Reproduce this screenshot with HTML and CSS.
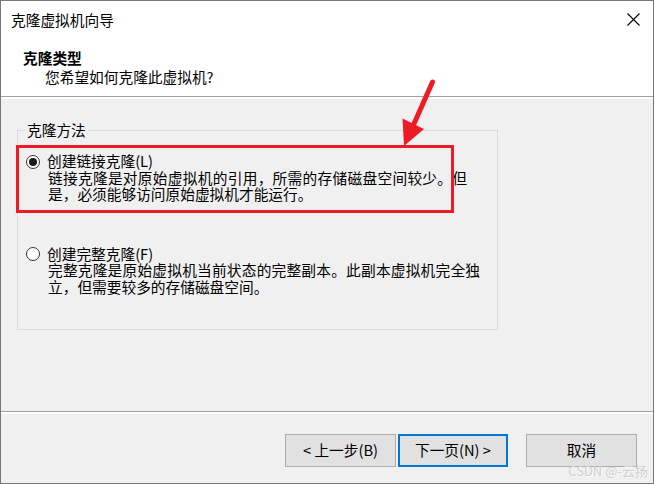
FILE: index.html
```html
<!DOCTYPE html>
<html lang="zh-CN">
<head>
<meta charset="utf-8">
<title>克隆虚拟机向导</title>
<link rel="stylesheet" href="styles.css">
</head>
<body>
<div class="window">
  <div class="top">
    <div class="titlebar">
      <span class="title">克隆虚拟机向导</span>
      <svg class="close" viewBox="0 0 13 13" aria-hidden="true"><path d="M0.5 0.5 L12.5 12.5 M12.5 0.5 L0.5 12.5" stroke="#000" stroke-width="1.1" fill="none"/></svg>
    </div>
    <div class="heading">
      <div class="h-title">克隆类型</div>
      <div class="h-sub">您希望如何克隆此虚拟机?</div>
    </div>
  </div>
  <div class="body">
    <fieldset class="group">
      <legend>克隆方法</legend>
      <div class="option">
        <span class="radio checked"></span>
        <div class="otext">
          <div class="olabel">创建链接克隆(L)</div>
          <div class="oline full linked">链接克隆是对原始虚拟机的引用，所需的存储磁盘空间较少。但</div>
          <div class="oline">是，必须能够访问原始虚拟机才能运行。</div>
        </div>
      </div>
      <div class="option second">
        <span class="radio"></span>
        <div class="otext">
          <div class="olabel">创建完整克隆(F)</div>
          <div class="oline full complete">完整克隆是原始虚拟机当前状态的完整副本。此副本虚拟机完全独</div>
          <div class="oline">立，但需要较多的存储磁盘空间。</div>
        </div>
      </div>
    </fieldset>
  </div>
  <div class="footer">
    <button class="btn back">&lt; 上一步(B)</button>
    <button class="btn next">下一页(N) &gt;</button>
    <button class="btn cancel">取消</button>
  </div>
  <svg class="annot" viewBox="0 0 655 484" aria-hidden="true">
    <rect x="17.5" y="146.5" width="435" height="65" fill="none" stroke="#ed1c24" stroke-width="3"/>
    <line x1="432.5" y1="82" x2="413" y2="126" stroke="#ed1c24" stroke-width="5" stroke-linecap="round"/>
    <polygon points="402.5,118.5 424,129 404,146" fill="#ed1c24"/>
  </svg>
  <div class="watermark">CSDN @-云扬</div>
</div>
</body>
</html>
```

FILE: styles.css
```css
html, body {
  margin: 0;
  padding: 0;
  background: #fff;
}

.window {
  position: relative;
  width: 654px;
  height: 484px;
  box-sizing: border-box;
  border: 1px solid #777;
  background: #f0f0f0;
  display: flex;
  flex-direction: column;
  font-family: "Noto Sans CJK SC", sans-serif;
  font-size: 14.7px;
  color: #000;
}

.top {
  flex: none;
  height: 96px;
  box-sizing: border-box;
  background: #fff;
  border-bottom: 1px solid #a0a0a0;
}

.titlebar {
  height: 38px;
  display: flex;
  align-items: center;
  justify-content: space-between;
  padding: 0 13px 0 10px;
}

.title {
  line-height: 20px;
}

.close {
  width: 13px;
  height: 13px;
  margin-bottom: 2px;
}

.heading {
  padding: 9px 0 0 22px;
}

.h-title {
  font-weight: bold;
  line-height: 19px;
}

.h-sub {
  line-height: 19px;
  padding-left: 22px;
}

.body {
  flex: none;
  height: 315px;
  box-sizing: border-box;
  border-top: 2px solid #fff;
  border-bottom: 1px solid #a0a0a0;
  padding: 23px 0 0 16px;
}

.group {
  margin: 0;
  width: 481px;
  box-sizing: border-box;
  border: 1px solid #dcdcdc;
  padding: 15px 0 34px 7px;
}

.group legend {
  padding: 0 2px;
  line-height: 16px;
}

.option {
  display: flex;
  line-height: 16.5px;
}

.option.second {
  margin-top: 43px;
}

.radio {
  flex: none;
  width: 14px;
  height: 14px;
  box-sizing: border-box;
  border: 1px solid #333;
  border-radius: 50%;
  background: #fff;
  margin: 1.5px 7px 0 1px;
  display: flex;
  align-items: center;
  justify-content: center;
}

.radio.checked::after {
  content: "";
  width: 8px;
  height: 8px;
  border-radius: 50%;
  background: #1a1a1a;
}

.oline {
  padding-left: 1px;
  white-space: nowrap;
}

.oline.full {
  text-align: justify;
  text-align-last: justify;
  text-justify: inter-character;
}

.oline.linked {
  width: 419px;
}

.oline.complete {
  width: 432px;
}

.footer {
  flex: 1;
  border-top: 2px solid #fff;
  display: flex;
  justify-content: flex-end;
  align-items: flex-start;
  padding: 20px 16px 0 0;
}

.btn {
  width: 111px;
  height: 33px;
  box-sizing: border-box;
  border: 1px solid #adadad;
  background: #e1e1e1;
  font: inherit;
  color: #000;
  padding: 0;
  line-height: 1;
  border-radius: 0;
}

.btn.back {
  margin-right: 2px;
}

.btn.next {
  width: 110px;
  border: 2px solid #0078d7;
  margin-right: 18px;
}

.annot {
  position: absolute;
  left: -1px;
  top: -1px;
  width: 655px;
  height: 484px;
  pointer-events: none;
}

.watermark {
  position: absolute;
  right: 5px;
  top: 463px;
  font-size: 13px;
  line-height: 14px;
  color: #cfcfcf;
  text-shadow: 1px 1px 0 rgba(255, 255, 255, 0.7);
  pointer-events: none;
}
```
